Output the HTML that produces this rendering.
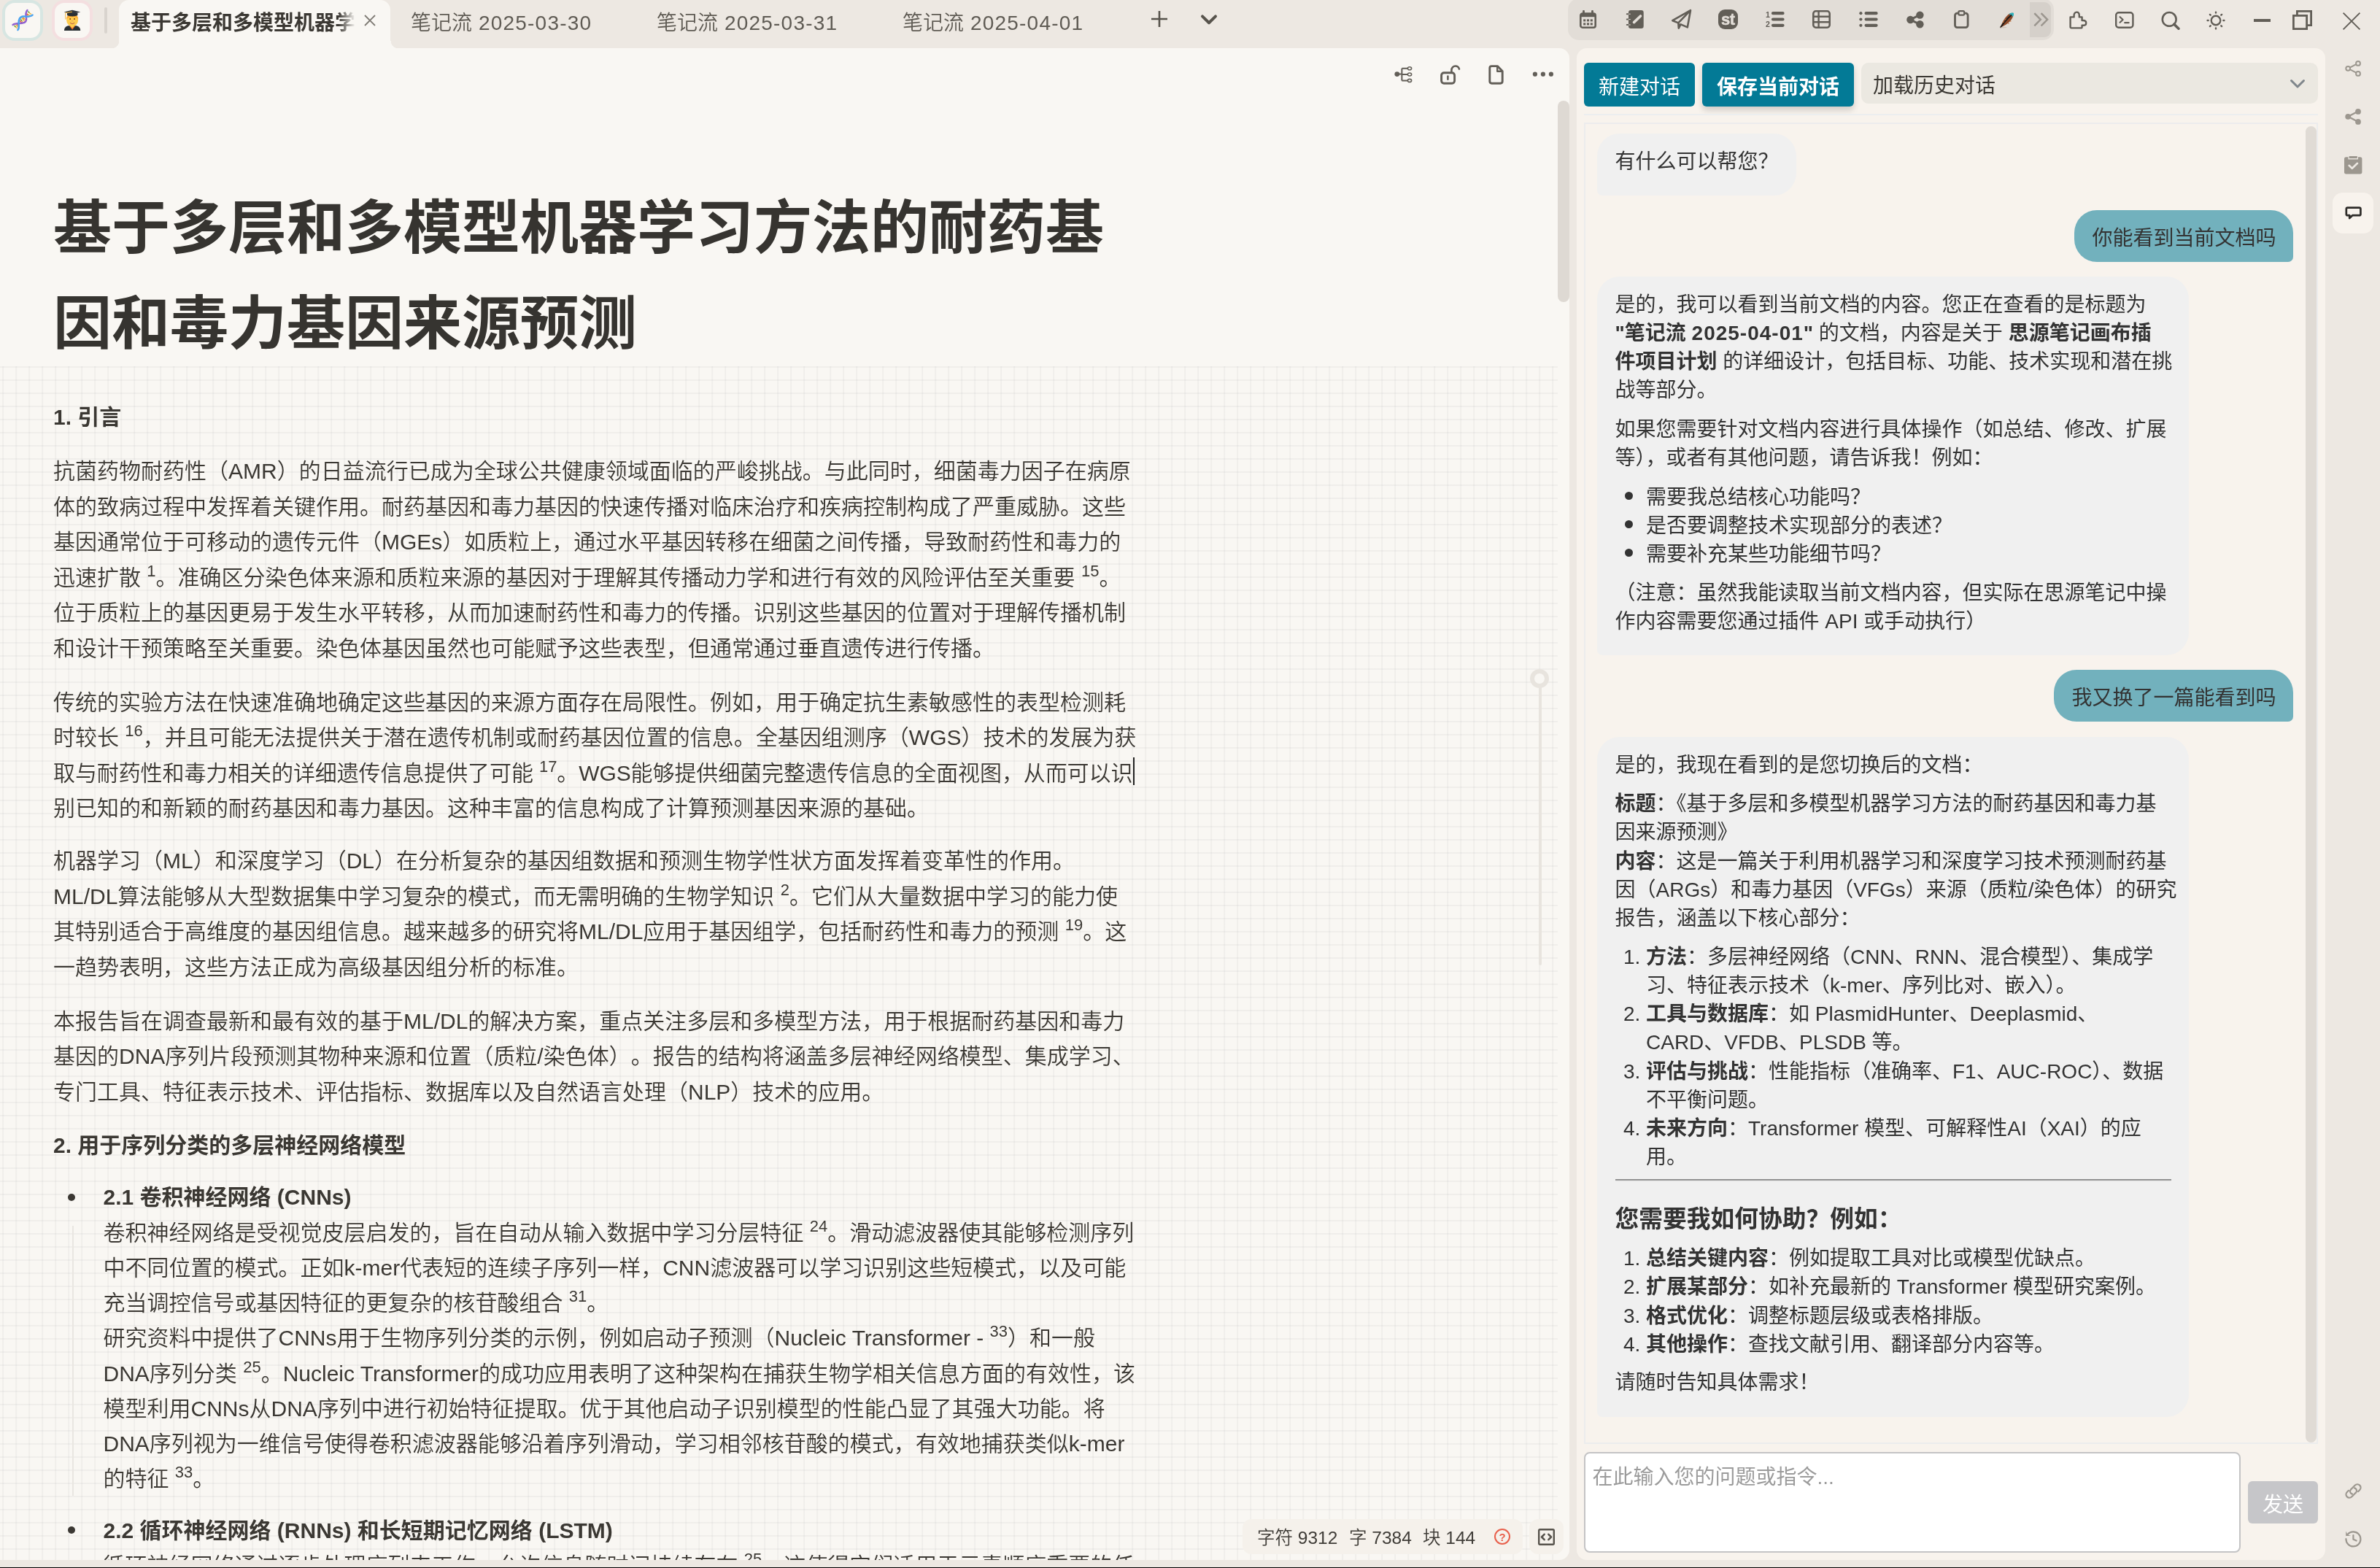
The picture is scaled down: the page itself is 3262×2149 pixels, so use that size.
<!DOCTYPE html>
<html lang="zh-CN">
<head>
<meta charset="utf-8">
<title>基于多层和多模型机器学习方法的耐药基因和毒力基因来源预测</title>
<style>
*{box-sizing:border-box;margin:0;padding:0}
html,body{width:3262px;height:2149px;overflow:hidden}
body{position:relative;background:#ede8e2;-webkit-font-smoothing:antialiased;font-family:"Liberation Sans","Noto Sans CJK SC",sans-serif;color:#3b3833;font-size:28px}
.abs{position:absolute}
svg{display:block;overflow:visible}
/* ---------- top bar ---------- */
#topbar{position:absolute;left:0;top:0;width:3262px;height:66px;will-change:transform}
.appico{position:absolute;top:4px;width:48px;height:48px;border-radius:13px;background:#f9f7f3}
#ico1{left:7px;box-shadow:0 0 0 4px #d7e6e2}
#ico2{left:75px;box-shadow:0 0 0 4px #f4dfe0}
#tabsep{position:absolute;left:143px;top:10px;width:4px;height:36px;border-radius:2px;background:#d9d4ce}
#tab1{position:absolute;left:163px;top:0;width:372px;height:66px;background:#f9f7f3;border-radius:14px 14px 0 0}
#tab1:before,#tab1:after{content:"";position:absolute;bottom:0;width:10.5px;height:10.5px}
#tab1:before{left:-10.5px;background:radial-gradient(circle at 0 0,rgba(249,247,243,0) 10px,#f9f7f3 10.6px)}
#tab1:after{right:-10.5px;background:radial-gradient(circle at 100% 0,rgba(249,247,243,0) 10px,#f9f7f3 10.6px)}
#tab1 .t{position:absolute;left:16px;top:11.5px;width:308px;height:40px;line-height:40px;font-weight:700;white-space:nowrap;overflow:hidden;color:#3b3833;-webkit-mask-image:linear-gradient(90deg,#000 285px,transparent 308px);mask-image:linear-gradient(90deg,#000 285px,transparent 308px)}
.tab{position:absolute;font-weight:350;top:11.5px;height:40px;line-height:40px;white-space:nowrap;color:#5f5b54}
.dt{letter-spacing:1.2px}
/* ---------- editor ---------- */
#editor{position:absolute;left:0;top:66px;width:2151px;height:2072px;background:#f9f7f3;border-radius:0 14px 14px 0;overflow:hidden}
#grid{position:absolute;left:0;top:502px;width:2135px;height:1640px;
background-image:linear-gradient(90deg,rgba(120,122,130,.068) 1.75px,transparent 1.75px),linear-gradient(180deg,rgba(120,122,130,.068) 1.75px,transparent 1.75px);background-size:18px 18px;background-position:3.2px 0}
#title{position:absolute;left:73px;top:246.5px;font-size:80px;line-height:131px;font-weight:700;color:#363430;white-space:nowrap}
.blk{position:absolute;left:73px;text-spacing-trim:space-all;font-weight:350;font-size:30px;line-height:48.5px;color:#3b3833;white-space:nowrap}
.blk.li{left:141.5px;line-height:48.25px}
.blk b{font-weight:700}
sup{font-size:22px;line-height:0;vertical-align:baseline;position:relative;top:-12px}
.dot{position:absolute;width:10px;height:10px;border-radius:50%;background:#3b3833;left:93px}
/* ---------- chat panel ---------- */
#chat{position:absolute;left:2161px;top:66px;width:1026px;height:2072px;background:#f8f3ed;border-radius:14px}
.btn{position:absolute;top:20px;height:60px;line-height:53px;padding-top:7px;border-radius:6px;background:#037a96;color:#fff;text-align:center;font-size:28px}
#sel{position:absolute;left:390px;top:20px;width:626px;height:56px;line-height:49px;padding-top:7px;border-radius:10px;background:#ebe8e1;padding-left:16px;color:#3b3833}
#msgs{position:absolute;left:10px;top:103px;width:1006px;height:1810px;border:2px solid #ececed;background:#f8f3ed;border-radius:0}
.bub{position:absolute;background:#f0f0f0;border-radius:31px 31px 31px 7px;color:#333;font-size:28px;line-height:39.2px;white-space:nowrap}
.bub.u{background:#72b1bd;border-radius:31px 31px 7px 31px}
.bub .p{position:absolute;left:24.5px;margin-top:3px}
.bub b{font-weight:700}
.bub .num{left:36px}
.bub .bd{position:absolute;left:38px;margin-top:-1px;width:11px;height:11px;border-radius:50%;background:#333}
#ta{position:absolute;left:10px;top:1924px;width:900px;height:138px;border:2px solid #c4c4c5;border-radius:8px;background:#fff;color:#9b9b9b;padding:12.5px 0 0 9.5px;line-height:40px}
#send{position:absolute;left:920px;top:1964px;width:96px;height:58px;line-height:51px;padding-top:7px;border-radius:6px;background:#c6c6c9;color:#fff;text-align:center}
/* ---------- dock ---------- */
#dockact{position:absolute;left:3197px;top:264px;width:56px;height:56px;border-radius:14px;background:#f8f3ed}
#blackbar{position:absolute;left:0;top:2147.6px;width:3262px;height:2px;background:#000}
</style>
</head>
<body>
<div id="topbar">
  <div class="appico" id="ico1"><svg width="48" height="48" viewBox="0 0 48 48"><g id="dna"><g transform="translate(-7,-4)">
<path d="M38.6 16.5L43 19.6M36.6 18.6L41 21.6M36.4 21.4L39.4 23.4" stroke="#f4b43a" stroke-width="1.3"/>
<path d="M38.2 15.6L40.4 17.2" stroke="#5cab4a" stroke-width="1.4"/><path d="M36.2 19.2L38.4 20.8" stroke="#e8504a" stroke-width="1.4"/>
<path d="M27.6 25.8L31.6 30.6M29.6 24.4L33.6 29M31.8 23.6L34.8 27.2" stroke="#f4b43a" stroke-width="1.3"/>
<path d="M28.4 26.6L30.2 28.8" stroke="#5cab4a" stroke-width="1.5"/><path d="M27.2 28.2L29.8 31.2" stroke="#e8504a" stroke-width="1.5"/><path d="M31.2 24.2L33.4 26.6" stroke="#f08a2c" stroke-width="1.5"/>
<path d="M19.4 35L23.4 38.8M21.6 34L25 37.2M23.6 33.4L25.6 35.4" stroke="#f4b43a" stroke-width="1.3"/>
<path d="M19.6 35.2L21.6 37" stroke="#5cab4a" stroke-width="1.5"/><path d="M23.4 33.4L25.2 35" stroke="#e8504a" stroke-width="1.5"/>
<path d="M37.4 14C34.6 17 35.2 20.2 36 24C36.8 28.4 35 31.4 30 31.8C25.6 32.2 21 31.6 17.6 34" fill="none" stroke="#8e5fd0" stroke-width="2.5" stroke-linecap="round"/>
<path d="M24.4 41C26.6 38.4 25.8 35.4 25.6 32C25.4 27 27 22.8 32 22.6C36.6 22.4 41 23.6 44.6 20.6" fill="none" stroke="#4aa3f0" stroke-width="2.5" stroke-linecap="round"/>
</g></g></svg></div>
  <div class="appico" id="ico2"><svg width="48" height="48" viewBox="0 0 48 48"><g id="stu"><g transform="translate(-75,-4)">
<path d="M88 42C88 37.4 91 35.2 94.6 35.2H103.6C107.2 35.2 110.2 37.4 110.2 42Z" fill="#292f33"/>
<path d="M95 35.2H103.2L99.1 40.8Z" fill="#f4702c"/>
<path d="M96.6 31H101.6V36.2L99.1 38.6L96.6 36.2Z" fill="#ffcc4d"/>
<ellipse cx="99.1" cy="27.4" rx="8" ry="8.6" fill="#ffcc4d"/>
<path d="M91 26.6C91 22 94 19.6 99.1 19.6C104.2 19.6 107.2 22 107.2 26.6C106 24.6 104.6 23.4 99.1 23.4C93.6 23.4 92.2 24.6 91 26.6Z" fill="#ffac33"/>
<circle cx="96.2" cy="26" r="1" fill="#7a3b18"/><circle cx="102" cy="26" r="1" fill="#7a3b18"/>
<path d="M96.4 31.4C98 32.8 100.2 32.8 101.8 31.4" fill="none" stroke="#c2694d" stroke-width="1.1" stroke-linecap="round"/>
<path d="M98.2 28.8H100" stroke="#e0a070" stroke-width="1" stroke-linecap="round"/>
<path d="M92 17.6H106.4V20.6C106.4 21.8 103 22.4 99.2 22.4C95.4 22.4 92 21.8 92 20.6Z" fill="#292f33"/>
<path d="M87.6 16.4L99 13.8L110.4 16.4L99 19Z" fill="#31373d"/>
<path d="M99 16.2L89.8 17.8V26.6" fill="none" stroke="#f4b43a" stroke-width="1" stroke-linejoin="round"/>
</g></g></svg></div>
  <div id="tabsep"></div>
  <div id="tab1"><div class="t">基于多层和多模型机器学习方法的耐药基因</div>
    <svg class="abs" style="left:336px;top:20px" width="16" height="16" viewBox="0 0 16 16"><path d="M1 1L15 15M15 1L1 15" stroke="#7d7972" stroke-width="1.8" fill="none"/></svg>
  </div>
  <div class="tab" style="left:563px">笔记流<span class="dt"> 2025-03-30</span></div>
  <div class="tab" style="left:900px">笔记流<span class="dt"> 2025-03-31</span></div>
  <div class="tab" style="left:1237px">笔记流<span class="dt"> 2025-04-01</span></div>
  <svg class="abs" style="left:1578px;top:15px" width="22" height="22" viewBox="0 0 22 22"><path d="M11 0V22M0 11H22" stroke="#57534c" stroke-width="2.6" fill="none"/></svg>
  <svg class="abs" style="left:1645px;top:19.5px" width="24" height="15" viewBox="0 0 24 15"><path d="M3 2.4L12 11.2L21 2.4" stroke="#57534c" stroke-width="4" fill="none" stroke-linecap="round" stroke-linejoin="round"/></svg>
  <div class="abs" id="tbgroup" style="left:2149px;top:-2px;width:666px;height:57px;border-radius:15px;background:#e2ddd7"></div>
  <div class="abs" style="left:2782px;top:3px;width:28.5px;height:48px;border-radius:0 9px 9px 0;background:#d5d0ca"></div>
  <!-- calendar -->
<svg class="abs" style="left:2165px;top:13.9px" width="23" height="25" viewBox="0 0 23 25" fill="#625e57"><rect x="1.3" y="4.6" width="20.4" height="19.1" rx="2.6" fill="none" stroke="#625e57" stroke-width="2.6"/><rect x="1.3" y="4.6" width="20.4" height="4.6"/><rect x="4.1" y="0" width="2.8" height="5" rx="1"/><rect x="16.1" y="0" width="2.8" height="5" rx="1"/><rect x="5.2" y="12.4" width="3" height="3"/><rect x="10" y="12.4" width="3" height="3"/><rect x="14.8" y="12.4" width="3" height="3"/><rect x="5.2" y="17.4" width="3" height="3"/><rect x="10" y="17.4" width="3" height="3"/><rect x="14.8" y="17.4" width="3" height="3"/></svg>
<!-- notebook -->
<svg class="abs" style="left:2228.6px;top:13.9px" width="24" height="25" viewBox="0 0 24 25"><rect x="3" y="0" width="20.7" height="25" rx="3.2" fill="#625e57"/><path d="M0.8 5.2H5.2M0.8 12.6H5.2M0.8 20H5.2" stroke="#625e57" stroke-width="2" stroke-linecap="round"/><path d="M3 5.2H5.8M3 12.6H5.8M3 20H5.8" stroke="#e3ded8" stroke-width="1" /><path d="M10.5 16.6L19.5 8" stroke="#e3ded8" stroke-width="3.6" stroke-linecap="round"/></svg>
<!-- paper plane -->
<svg class="abs" style="left:2291px;top:12.9px" width="28" height="28" viewBox="0 0 28 28"><path d="M26 1.2L1.3 15.2L9.3 18.4L26 1.2L21.8 24.4L12.6 20.4L9.8 25.6L9.3 18.4" fill="none" stroke="#625e57" stroke-width="2.6" stroke-linejoin="round" stroke-linecap="round"/><path d="M9.3 18.6L12.8 20.4L9.9 25.6Z" fill="#625e57"/></svg>
<!-- st -->
<svg class="abs" style="left:2355px;top:12.9px" width="27" height="27" viewBox="0 0 27 27"><rect width="27" height="27" rx="9" fill="#625e57"/><text x="13.3" y="21" text-anchor="middle" font-family="Liberation Sans,sans-serif" font-weight="700" font-size="22" fill="#e3ded8" stroke="#e3ded8" stroke-width=".5" letter-spacing="-0.4">st</text></svg>
<!-- numbered list -->
<svg class="abs" style="left:2419.5px;top:15px" width="26" height="24" viewBox="0 0 26 24"><path d="M10 3.2H23.5M10 11.5H23.5M10 19.8H23.5" stroke="#625e57" stroke-width="4.2" stroke-linecap="round"/><text x="0" y="8.6" font-family="Liberation Sans,sans-serif" font-weight="700" font-size="10.5" fill="#625e57">1</text><text x="0" y="22.4" font-family="Liberation Sans,sans-serif" font-weight="700" font-size="10.5" fill="#625e57">2</text></svg>
<!-- table -->
<svg class="abs" style="left:2484px;top:13.9px" width="25" height="25" viewBox="0 0 25 25"><rect x="1.3" y="1.3" width="22.4" height="22.4" rx="3.4" fill="none" stroke="#625e57" stroke-width="2.6"/><path d="M8.6 1.3V23.7M1.3 8.8H23.7M1.3 16.3H23.7" stroke="#625e57" stroke-width="2.4" fill="none"/></svg>
<!-- bullet list -->
<svg class="abs" style="left:2547.5px;top:15px" width="26" height="24" viewBox="0 0 26 24"><path d="M9.6 3.2H23.6M9.6 11.5H23.6M9.6 19.8H23.6" stroke="#625e57" stroke-width="4.2" stroke-linecap="round"/><circle cx="2.4" cy="3.2" r="2.1" fill="#625e57"/><circle cx="2.4" cy="11.5" r="2.1" fill="#625e57"/><circle cx="2.4" cy="19.8" r="2.1" fill="#625e57"/></svg>
<!-- share filled -->
<svg class="abs" style="left:2612.5px;top:14.5px" width="24" height="24" viewBox="0 0 24 24"><path d="M18.4 5.4L5.2 12L18.4 18.4" fill="none" stroke="#625e57" stroke-width="3"/><circle cx="18.4" cy="5.6" r="5.2" fill="#625e57"/><circle cx="18.4" cy="18.2" r="5.2" fill="#625e57"/><circle cx="5.4" cy="12" r="5.2" fill="#625e57"/></svg>
<!-- clipboard -->
<svg class="abs" style="left:2678.2px;top:13.9px" width="21" height="25" viewBox="0 0 21 25"><rect x="1.5" y="4.2" width="17.6" height="19.4" rx="3" fill="none" stroke="#625e57" stroke-width="2.8"/><rect x="6.4" y="1.1" width="7.8" height="5.6" rx="1.6" fill="#e3ded8" stroke="#625e57" stroke-width="2.2"/></svg>
<!-- feather -->
<svg class="abs" style="left:2741px;top:16px" width="21" height="23" viewBox="0 0 21 23"><path d="M1 21.5C3 15 6 8.5 12 3.5C14 2 17 1.2 18.5 2.2C19 5 17.5 9 14.5 12.5C11 16.5 6 19.5 1 21.5Z" fill="#8c4a2a"/><path d="M12.5 3.2C14.5 1.6 17.5 1 19 2C19.2 3.6 18.8 5.2 18 6.8Z" fill="#2fb3bd"/><path d="M1.2 21.3C5 15.5 9.5 10 15.5 5" stroke="#1f1a18" stroke-width="2" fill="none" stroke-linecap="round"/><path d="M6 13.5L4.2 14.8M8.5 10.5L6.4 11.2M11 16L12.6 16.4M13.6 13L15.4 13.2" stroke="#c77a45" stroke-width="1.2"/><ellipse cx="5" cy="21.6" rx="4.6" ry=".8" fill="#cbb9ab" opacity=".7"/></svg>
<!-- >> -->
<svg class="abs" style="left:2786.5px;top:16.5px" width="21" height="20" viewBox="0 0 21 20"><path d="M1.3 1.2L9.8 9.8L1.3 18.4M10.6 1.2L19.1 9.8L10.6 18.4" fill="none" stroke="#9b968f" stroke-width="2.5"/></svg>
<!-- puzzle -->
<svg class="abs" style="left:2834.6px;top:14.4px" width="26" height="26" viewBox="0 0 26 26"><path d="M2.6 9.4H7.6V7.2C7.6 4.6 9 2.6 11.2 2.6C13.4 2.6 14.8 4.6 14.8 7.2V9.4H18.6V14H20.2C22.6 14 24.2 15.4 24.2 17.4C24.2 19.4 22.6 20.8 20.2 20.8H18.6V23C18.6 23.8 18 24.4 17.2 24.4H4C3.2 24.4 2.6 23.8 2.6 23Z" fill="none" stroke="#625e57" stroke-width="2.4" stroke-linejoin="round"/></svg>
<!-- terminal -->
<svg class="abs" style="left:2898.8px;top:16px" width="26" height="23" viewBox="0 0 26 23"><rect x="1.2" y="1.2" width="23.2" height="20.6" rx="3.6" fill="none" stroke="#625e57" stroke-width="2.4"/><path d="M6.6 7.2L10.6 11L6.6 14.8" fill="none" stroke="#625e57" stroke-width="2.2" stroke-linejoin="round" stroke-linecap="round"/><path d="M13.2 15.2H18.6" stroke="#625e57" stroke-width="2.2" stroke-linecap="round"/></svg>
<!-- search -->
<svg class="abs" style="left:2961.6px;top:15px" width="26" height="26" viewBox="0 0 26 26"><circle cx="11.2" cy="11.4" r="9.4" fill="none" stroke="#625e57" stroke-width="2.6"/><path d="M17.8 18.2L24 24.2" stroke="#625e57" stroke-width="3.6" stroke-linecap="round"/></svg>
<!-- sun -->
<svg class="abs" style="left:3024.4px;top:14.5px" width="26" height="26" viewBox="0 0 26 26"><circle cx="13" cy="13" r="6.3" fill="none" stroke="#625e57" stroke-width="2.4"/><path d="M13 1.6V2.6M13 23.4V24.4M1.6 13H2.6M23.4 13H24.4M4.9 4.9L5.7 5.7M20.3 20.3L21.1 21.1M4.9 21.1L5.7 20.3M20.3 5.7L21.1 4.9" stroke="#625e57" stroke-width="2.4" stroke-linecap="round"/></svg>
<!-- minimize -->
<div class="abs" style="left:3088.8px;top:25.6px;width:23.2px;height:4.2px;background:#625e57"></div>
<!-- restore -->
<svg class="abs" style="left:3142px;top:13.9px" width="27" height="27" viewBox="0 0 27 27"><rect x="1.4" y="7.4" width="18.2" height="18.2" fill="none" stroke="#625e57" stroke-width="2.8"/><path d="M6.4 7V1.4H25.6V20.6H20" fill="none" stroke="#625e57" stroke-width="2.8"/></svg>
<!-- close -->
<svg class="abs" style="left:3211px;top:17.4px" width="24" height="24" viewBox="0 0 24 24"><path d="M0.6 0.6L23.4 23.4M23.4 0.6L0.6 23.4" stroke="#625e57" stroke-width="1.9" fill="none"/></svg>

</div>

<div id="editor"><div id="ed" class="abs" style="left:0;top:-66px;width:2151px;height:2149px;will-change:transform">
  <div id="grid"></div>
  <!-- tree -->
<svg class="abs" style="left:1910.5px;top:91px" width="25" height="22" viewBox="0 0 25 22"><path d="M3.6 10.6H10.4M10.4 2.8V19.4M10.4 2.8H18M10.4 11H18M10.4 19.4H18" fill="none" stroke="#625e57" stroke-width="2" stroke-linejoin="round"/><circle cx="3.8" cy="10.6" r="3.4" fill="#625e57"/><ellipse cx="21" cy="2.8" rx="2.6" ry="2" fill="#f9f7f3" stroke="#625e57" stroke-width="1.6"/><ellipse cx="21" cy="11" rx="2.6" ry="2" fill="#f9f7f3" stroke="#625e57" stroke-width="1.6"/><ellipse cx="21" cy="19.4" rx="2.6" ry="2" fill="#f9f7f3" stroke="#625e57" stroke-width="1.6"/></svg>
<!-- unlock -->
<svg class="abs" style="left:1973.6px;top:88.6px" width="28" height="27" viewBox="0 0 28 27"><rect x="1.6" y="10.8" width="18" height="14.4" rx="3.4" fill="none" stroke="#625e57" stroke-width="2.9"/><path d="M10.4 15.6V19.8" stroke="#625e57" stroke-width="2.6" stroke-linecap="round"/><path d="M15.4 10.4V7.4C15.4 3.8 17.8 1.5 20.8 1.5C23.2 1.5 25.2 3 26 5.6" fill="none" stroke="#625e57" stroke-width="2.6" stroke-linecap="round"/></svg>
<!-- file -->
<svg class="abs" style="left:2040.4px;top:88.8px" width="21" height="27" viewBox="0 0 21 27"><path d="M4.4 1.6H12.4L19.2 8.6V22.6C19.2 24.2 18 25.2 16.6 25.2H4.4C2.8 25.2 1.8 24.2 1.8 22.6V4.2C1.8 2.6 2.8 1.6 4.4 1.6Z" fill="none" stroke="#625e57" stroke-width="2.9" stroke-linejoin="round"/><path d="M12.2 1.8V8.8H19" fill="none" stroke="#625e57" stroke-width="2.4" stroke-linejoin="round"/></svg>
<!-- dots -->
<svg class="abs" style="left:2100px;top:98px" width="30" height="8" viewBox="0 0 30 8" fill="#625e57"><circle cx="3.9" cy="3.7" r="3.1"/><circle cx="14.9" cy="3.7" r="3.1"/><circle cx="25.9" cy="3.7" r="3.1"/></svg>

  <div class="abs" id="edscroll" style="left:2135px;top:138px;width:16px;height:276px;border-radius:8px;background:#ded9d3"></div>
  <div class="abs" style="left:2097px;top:916.5px;width:26.2px;height:26.2px;border-radius:50%;border:6.5px solid #e8e4de;background:#f9f7f3"></div>
  <div class="abs" style="left:2109px;top:941px;width:4px;height:382px;background:#e8e4de;border-radius:0 0 2px 2px"></div>
  <div id="title">基于多层和多模型机器学习方法的耐药基<br>因和毒力基因来源预测</div>
  <div class="blk" style="top:547.7px"><b>1. 引言</b></div>
  <div class="blk" style="top:622px">
<div class="ln">抗菌药物耐药性（AMR）的日益流行已成为全球公共健康领域面临的严峻挑战。与此同时，细菌毒力因子在病原</div>
<div class="ln">体的致病过程中发挥着关键作用。耐药基因和毒力基因的快速传播对临床治疗和疾病控制构成了严重威胁。这些</div>
<div class="ln">基因通常位于可移动的遗传元件（MGEs）如质粒上，通过水平基因转移在细菌之间传播，导致耐药性和毒力的</div>
<div class="ln">迅速扩散 <sup>1</sup>。准确区分染色体来源和质粒来源的基因对于理解其传播动力学和进行有效的风险评估至关重要 <sup>15</sup>。</div>
<div class="ln">位于质粒上的基因更易于发生水平转移，从而加速耐药性和毒力的传播。识别这些基因的位置对于理解传播机制</div>
<div class="ln">和设计干预策略至关重要。染色体基因虽然也可能赋予这些表型，但通常通过垂直遗传进行传播。</div>
  </div>
  <div class="blk" style="top:938.5px">
<div class="ln">传统的实验方法在快速准确地确定这些基因的来源方面存在局限性。例如，用于确定抗生素敏感性的表型检测耗</div>
<div class="ln">时较长 <sup>16</sup>，并且可能无法提供关于潜在遗传机制或耐药基因位置的信息。全基因组测序（WGS）技术的发展为获</div>
<div class="ln" style="letter-spacing:-.1px">取与耐药性和毒力相关的详细遗传信息提供了可能 <sup>17</sup>。WGS能够提供细菌完整遗传信息的全面视图，从而可以识</div>
<div class="ln">别已知的和新颖的耐药基因和毒力基因。这种丰富的信息构成了计算预测基因来源的基础。</div>
  </div>
  <div class="abs" id="caret" style="left:1553px;top:1038px;width:2px;height:38px;background:#222"></div>
  <div class="blk" style="top:1156.4px">
<div class="ln">机器学习（ML）和深度学习（DL）在分析复杂的基因组数据和预测生物学性状方面发挥着变革性的作用。</div>
<div class="ln">ML/DL算法能够从大型数据集中学习复杂的模式，而无需明确的生物学知识 <sup>2</sup>。它们从大量数据中学习的能力使</div>
<div class="ln">其特别适合于高维度的基因组信息。越来越多的研究将ML/DL应用于基因组学，包括耐药性和毒力的预测 <sup>19</sup>。这</div>
<div class="ln">一趋势表明，这些方法正成为高级基因组分析的标准。</div>
  </div>
  <div class="blk" style="top:1375.5px">
<div class="ln">本报告旨在调查最新和最有效的基于ML/DL的解决方案，重点关注多层和多模型方法，用于根据耐药基因和毒力</div>
<div class="ln">基因的DNA序列片段预测其物种来源和位置（质粒/染色体）。报告的结构将涵盖多层神经网络模型、集成学习、</div>
<div class="ln">专门工具、特征表示技术、评估指标、数据库以及自然语言处理（NLP）技术的应用。</div>
  </div>
  <div class="blk" style="top:1545.5px"><b>2. 用于序列分类的多层神经网络模型</b></div>
  <div class="dot" style="top:1636px"></div>
  <div class="abs" style="left:99px;top:1680px;width:1.5px;height:370px;background:#e9e6e1"></div>
  <div class="blk li" style="top:1617.3px">
<div class="ln"><b>2.1 卷积神经网络 (CNNs)</b></div>
<div class="ln">卷积神经网络是受视觉皮层启发的，旨在自动从输入数据中学习分层特征 <sup>24</sup>。滑动滤波器使其能够检测序列</div>
<div class="ln">中不同位置的模式。正如k-mer代表短的连续子序列一样，CNN滤波器可以学习识别这些短模式，以及可能</div>
<div class="ln">充当调控信号或基因特征的更复杂的核苷酸组合 <sup>31</sup>。</div>
<div class="ln">研究资料中提供了CNNs用于生物序列分类的示例，例如启动子预测（Nucleic Transformer - <sup>33</sup>）和一般</div>
<div class="ln">DNA序列分类 <sup>25</sup>。Nucleic Transformer的成功应用表明了这种架构在捕获生物学相关信息方面的有效性，该</div>
<div class="ln">模型利用CNNs从DNA序列中进行初始特征提取。优于其他启动子识别模型的性能凸显了其强大功能。将</div>
<div class="ln">DNA序列视为一维信号使得卷积滤波器能够沿着序列滑动，学习相邻核苷酸的模式，有效地捕获类似k-mer</div>
<div class="ln">的特征 <sup>33</sup>。</div>
  </div>
  <div class="dot" style="top:2092px"></div>
  <div class="blk li" style="top:2073.5px">
<div class="ln"><b>2.2 循环神经网络 (RNNs) 和长短期记忆网络 (LSTM)</b></div>
<div class="ln">循环神经网络通过逐步处理序列来工作，允许信息随时间持续存在 <sup>25</sup>。这使得它们适用于元素顺序重要的任</div>
  </div>
  <div class="abs" id="status" style="left:1703px;top:2082px;width:384px;height:48px;border-radius:12px;background:#f5f1eb;font-size:24.5px;line-height:48px;color:#3f3c37;font-weight:350;white-space:nowrap"><!--st--><span class="abs" style="left:20px;top:2px">字符 9312</span><span class="abs" style="left:146px;top:2px">字 7384</span><span class="abs" style="left:247px;top:2px">块 144</span>
    <svg class="abs" style="left:344px;top:12px" width="24" height="24" viewBox="0 0 24 24"><circle cx="12" cy="12" r="10" fill="none" stroke="#e8604c" stroke-width="2"/><text x="12" y="17.5" font-size="15" font-weight="700" text-anchor="middle" fill="#e8604c" font-family="Liberation Sans,sans-serif">?</text></svg></div>
  <div class="abs" style="left:2096px;top:2082px;width:47px;height:48px;border-radius:12px;background:#f5f1eb">
    <svg class="abs" style="left:12px;top:13px" width="23" height="23" viewBox="0 0 23 23"><rect x="1.2" y="1.2" width="20.6" height="20.6" rx="1.5" fill="none" stroke="#57534c" stroke-width="2.4"/><path d="M8.6 7.8L5 11.5L8.6 15.2M14.4 7.8L18 11.5L14.4 15.2" fill="none" stroke="#57534c" stroke-width="2.6" stroke-linecap="round" stroke-linejoin="round"/></svg></div>
</div></div>

<div id="chat"><div id="ch" class="abs" style="left:-2161px;top:-66px;width:3262px;height:2149px;will-change:transform">
  <div class="btn" style="left:2171px;top:86px;width:152px">新建对话</div>
  <div class="btn" style="left:2333px;top:86px;width:208px;font-weight:700;box-shadow:0 5px 9px rgba(0,0,0,.16)">保存当前对话</div>
  <div id="sel" style="left:2551px;top:86px;width:626px">加载历史对话
    <svg class="abs" style="left:588px;top:23px" width="20" height="12" viewBox="0 0 20 12"><path d="M1.5 1.5L10 10L18.5 1.5" fill="none" stroke="#7f868b" stroke-width="3" stroke-linecap="round" stroke-linejoin="round"/></svg></div>
  <div class="abs" style="left:2171px;top:156px;width:1006px;height:2px;background:#eceeef"></div>
  <div id="msgs" style="left:2171px;top:168px;width:1006px;height:1811px"></div>
  <div class="abs" style="left:3159.5px;top:173px;width:15px;height:1804px;border-radius:8px;background:#e0dbd5"></div>

  <div class="bub" style="left:2189px;top:183.3px;width:272.5px;height:84.7px"><div class="p" style="top:15.75px">有什么可以帮您？</div></div>
  <div class="bub u" style="left:2843px;top:288.3px;width:300.2px;height:70.7px"><div class="p" style="top:15.75px">你能看到当前文档吗</div></div>

  <div class="bub" style="left:2189px;top:379px;width:811px;height:518.7px">
    <div class="p" style="top:15.75px">是的，我可以看到当前文档的内容。您正在查看的是标题为<br><b>"笔记流 <span style="letter-spacing:1px">2025-04-01</span>"</b> 的文档，内容是关于 <b>思源笔记画布插</b><br><b>件项目计划</b> 的详细设计，包括目标、功能、技术实现和潜在挑<br>战等部分。</div>
    <div class="p" style="top:186.5px">如果您需要针对文档内容进行具体操作（如总结、修改、扩展<br>等），或者有其他问题，请告诉我！例如：</div>
    <div class="p" style="top:279.5px;left:67px">需要我总结核心功能吗？<br>是否要调整技术实现部分的表述？<br>需要补充某些功能细节吗？</div>
    <i class="bd" style="top:295.5px"></i><i class="bd" style="top:334.5px"></i><i class="bd" style="top:373.7px"></i>
    <div class="p" style="top:410.5px">（注意：虽然我能读取当前文档内容，但实际在思源笔记中操</div>
    <div class="p" style="top:449.7px">作内容需要您通过插件 API 或手动执行）</div>
  </div>

  <div class="bub u" style="left:2815px;top:918.3px;width:328.2px;height:70.7px"><div class="p" style="top:15.75px">我又换了一篇能看到吗</div></div>

  <div class="bub" style="left:2189px;top:1010.2px;width:811px;height:931.4px">
    <div class="p" style="top:15.75px">是的，我现在看到的是您切换后的文档：</div>
    <div class="p" style="top:69px"><b>标题</b>：《基于多层和多模型机器学习方法的耐药基因和毒力基<br>因来源预测》<br><b>内容</b>：这是一篇关于利用机器学习和深度学习技术预测耐药基<br>因（ARGs）和毒力基因（VFGs）来源（质粒/染色体）的研究<br>报告，涵盖以下核心部分：</div>
    <div class="p" style="top:278.6px;left:67px"><b>方法</b>：多层神经网络（CNN、RNN、混合模型）、集成学<br>习、特征表示技术（k-mer、序列比对、嵌入）。<br><b>工具与数据库</b>：如 PlasmidHunter、Deeplasmid、<br>CARD、VFDB、PLSDB 等。<br><b>评估与挑战</b>：性能指标（准确率、F1、AUC-ROC）、数据<br>不平衡问题。<br><b>未来方向</b>：Transformer 模型、可解释性AI（XAI）的应<br>用。</div>
    <div class="p num" style="top:278.6px">1.<br><br>2.<br><br>3.<br><br>4.</div>
    <div class="abs" style="left:24.5px;top:605.5px;width:762px;height:3px;background:#9c9c9c;border-top:1.5px solid #8a8a8a;border-bottom:1.5px solid #e4e4e4"></div>
    <div class="p" style="top:634.5px;font-size:32.76px;line-height:46px;font-weight:700">您需要我如何协助？例如：</div>
    <div class="p" style="top:692px;left:67px"><b>总结关键内容</b>：例如提取工具对比或模型优缺点。<br><b>扩展某部分</b>：如补充最新的 Transformer 模型研究案例。<br><b>格式优化</b>：调整标题层级或表格排版。<br><b>其他操作</b>：查找文献引用、翻译部分内容等。</div>
    <div class="p num" style="top:692px">1.<br>2.<br>3.<br>4.</div>
    <div class="p" style="top:861.8px">请随时告知具体需求！</div>
  </div>

  <div id="ta" style="left:2171px;top:1990px;width:900px;height:138px">在此输入您的问题或指令...</div>
  <div id="send" style="left:3081px;top:2030px;width:96px;height:58px">发送</div>
</div></div>

<div id="dockact"></div>
<!-- share outline -->
<svg class="abs" style="left:3214px;top:83px" width="23" height="22" viewBox="0 0 23 22"><path d="M17.6 3.8L4.4 10.8L17.6 17.8" fill="none" stroke="#9c978f" stroke-width="2"/><circle cx="18" cy="3.9" r="2.9" fill="#ede8e2" stroke="#9c978f" stroke-width="2"/><circle cx="18" cy="17.9" r="2.9" fill="#ede8e2" stroke="#9c978f" stroke-width="2"/><circle cx="4.2" cy="10.8" r="2.9" fill="#ede8e2" stroke="#9c978f" stroke-width="2"/></svg>
<!-- share filled -->
<svg class="abs" style="left:3214px;top:149px" width="23" height="22" viewBox="0 0 23 22"><path d="M17.6 3.8L4.4 10.8L17.6 17.8" fill="none" stroke="#9c978f" stroke-width="2.4"/><circle cx="18" cy="3.9" r="3.9" fill="#9c978f"/><circle cx="18" cy="17.9" r="3.9" fill="#9c978f"/><circle cx="4.2" cy="10.8" r="3.9" fill="#9c978f"/></svg>
<!-- clipboard check -->
<svg class="abs" style="left:3213px;top:213.6px" width="25" height="25" viewBox="0 0 25 25"><rect x="0" y="1.2" width="24.4" height="23.2" rx="2.6" fill="#9c978f"/><path d="M5.4 0.2H19V4.4H5.4Z" fill="#ede8e2"/><rect x="6.6" y="0" width="11.2" height="3" fill="#9c978f"/><path d="M6.6 12.8L10.8 16.8L18 9.8" fill="none" stroke="#ede8e2" stroke-width="2.6" stroke-linecap="round" stroke-linejoin="round"/></svg>
<!-- chat -->
<svg class="abs" style="left:3213.6px;top:283px" width="24" height="18" viewBox="0 0 24 18"><path d="M3.6 1.6H19.6C20.8 1.6 21.4 2.2 21.4 3.4V10.4C21.4 11.6 20.8 12.2 19.6 12.2H10.2L6.2 16V12.2H3.6C2.4 12.2 1.8 11.6 1.8 10.4V3.4C1.8 2.2 2.4 1.6 3.6 1.6Z" fill="none" stroke="#2e2c29" stroke-width="2.7" stroke-linejoin="round"/><path d="M6.2 12.4L10 12.4L6.2 16.2Z" fill="#2e2c29"/></svg>
<!-- link -->
<svg class="abs" style="left:3213.6px;top:2032.4px" width="23" height="23" viewBox="0 0 23 23"><path d="M8.2 9.2L13.6 3.8C15.6 1.8 18.4 1.8 20.2 3.6C22 5.4 22 8.2 20 10.2L18 12.2" fill="none" stroke="#9c978f" stroke-width="2.2" stroke-linecap="round"/><path d="M14.8 13.8L9.4 19.2C7.4 21.2 4.6 21.2 2.8 19.4C1 17.6 1 14.8 3 12.8L5 10.8" fill="none" stroke="#9c978f" stroke-width="2.2" stroke-linecap="round"/><path d="M8.2 9.2C6.6 10.8 6.8 13.2 8.2 14.6C8.8 15.2 9.4 15.4 10 15.6M14.8 13.8C16.4 12.2 16.2 9.8 14.8 8.4C14.2 7.8 13.6 7.6 13 7.4" fill="none" stroke="#9c978f" stroke-width="2.2" stroke-linecap="round"/></svg>
<!-- history -->
<svg class="abs" style="left:3213.6px;top:2098.4px" width="23" height="23" viewBox="0 0 23 23"><path d="M1.4 11.2C1.4 16.8 5.8 21.4 11.4 21.4C17 21.4 21.4 17 21.4 11.4C21.4 5.8 17 1.4 11.4 1.4C8.2 1.4 5.4 2.8 3.4 5.2" fill="none" stroke="#9c978f" stroke-width="2.2" stroke-linecap="round"/><path d="M1.2 0.6V7H8.2L3.6 5.2Z" fill="#9c978f"/><path d="M11.4 6V11.8L15.6 13.6" fill="none" stroke="#9c978f" stroke-width="2.2" stroke-linecap="round" stroke-linejoin="round"/></svg>

<div id="blackbar"></div>
</body>
</html>
